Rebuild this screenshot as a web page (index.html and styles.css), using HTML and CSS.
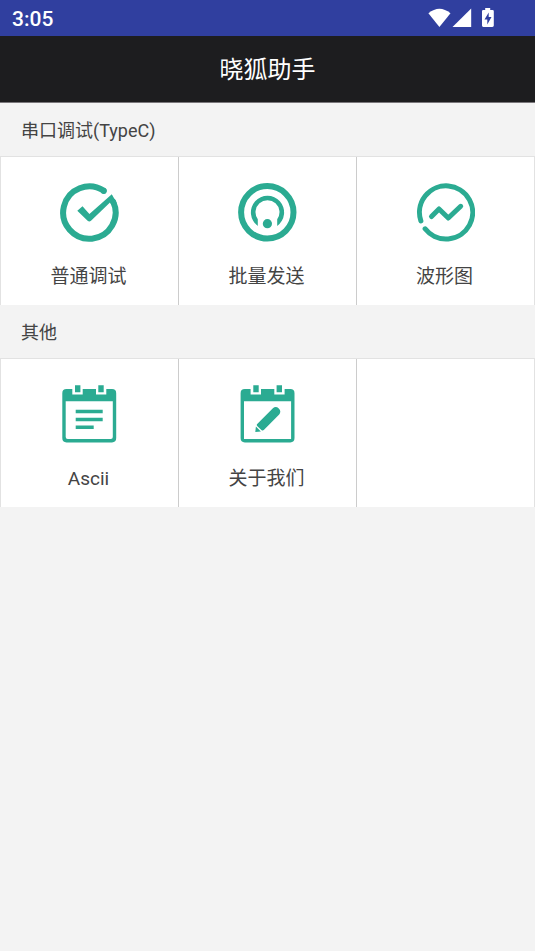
FILE: index.html
```html
<!DOCTYPE html>
<html lang="zh-CN">
<head>
<meta charset="utf-8">
<meta name="viewport" content="width=device-width, initial-scale=1">
<title>晓狐助手</title>
<link rel="stylesheet" href="styles.css">
</head>
<body>
<div class="status-bar">
  <time class="clock">3:05</time>
  <svg class="status-icons" viewBox="0 0 68 20" aria-hidden="true">
    <path d="M.4 5.3Q11.4-3.9 22.5 5.3L11.4 18.9Z"/>
    <path d="M24.5 18.9 43.2.4V18.9Z"/>
    <path fill-rule="evenodd" d="M57.2 0h5v2H64.5q1.3 0 1.3 1.3V17.5q0 1.4-1.5 1.4h-9q-1.3 0-1.3-1.4V3.3Q54 2 55.3 2h1.9ZM60.7 4.5 56.5 11.5h2.8v5l4.2-7.4h-2.8Z"/>
  </svg>
</div>
<header class="title-bar"><h1>晓狐助手</h1></header>
<main>
  <section>
    <h2>串口调试(TypeC)</h2>
    <nav class="tiles">
      <a class="tile" href="#debug">
        <svg class="icon" viewBox="0 0 60 60" aria-hidden="true">
          <path class="line ring" d="M44.6 8.6A26.2 26.2 0 1 0 54.1 19.5"/>
          <circle class="fill" cx="44.7" cy="9" r="3"/>
          <path class="fill" d="M18.3 28.7 23.5 24.3 30.4 32 52.8 12.3 58 21.5 52.2 22.5 51 20.5 32 38.7Q30.3 40.2 28.6 38.7Z"/>
        </svg>
        <span>普通调试</span>
      </a>
      <a class="tile" href="#batch">
        <svg class="icon" viewBox="0 0 60 60" aria-hidden="true">
          <circle class="line ring" cx="30.3" cy="30.3" r="26.2"/>
          <path class="fill" d="M20.8 43.9A16.6 16.6 0 1 1 40.2 43.9V37.3A12 12 0 1 0 20.8 37.3Z"/>
          <circle class="fill" cx="30.4" cy="41.7" r="4.6"/>
        </svg>
        <span>批量发送</span>
      </a>
      <a class="tile" href="#wave">
        <svg class="icon" viewBox="0 0 60 60" aria-hidden="true">
          <path class="line wave" d="M5.9 39A26.6 26.6 0 1 1 10.1 46.8"/>
          <path class="line wave" d="M16.5 34.5 24 27 33.3 36 45.7 24.3"/>
        </svg>
        <span>波形图</span>
      </a>
    </nav>
  </section>
  <section>
    <h2>其他</h2>
    <nav class="tiles">
      <a class="tile" href="#ascii">
        <svg class="icon" viewBox="0 0 60 60" aria-hidden="true">
          <path class="fill" fill-rule="evenodd" d="M7.5 5H13.3V10.5H23.7V5H37V10.5H47.3V5H53Q57.2 5 57.2 9.2V54Q57.2 58.4 53 58.4H7.5Q3.3 58.4 3.3 54V9.2Q3.3 5 7.5 5ZM6.7 17.3V53Q6.7 55 8.7 55H51.8Q53.8 55 53.8 53V17.3Z"/>
          <path class="fill" d="M16 1.3h5.4v7H16ZM39.3 1.3h5.4v7h-5.4ZM16.7 25.8h27v3.5h-27ZM16.7 33.7h27v3.6h-27ZM16.7 41.6h18v3.5h-18Z"/>
        </svg>
        <span>Ascii</span>
      </a>
      <a class="tile" href="#about">
        <svg class="icon" viewBox="0 0 60 60" aria-hidden="true">
          <path class="fill" fill-rule="evenodd" d="M7.8 5H13.6V10.5H24V5H37.3V10.5H47.6V5H53.3Q57.5 5 57.5 9.2V54Q57.5 58.4 53.3 58.4H7.8Q3.6 58.4 3.6 54V9.2Q3.6 5 7.8 5ZM7 17.3V55H54.1V17.3Z"/>
          <path class="fill" d="M16.3 1.3h5.4v7h-5.4ZM39.6 1.3H45v7h-5.4ZM20.2 40 35.9 24.2Q38.9 21.8 41.8 24.5 44.6 27.3 42.2 30.4L26.8 46Q25.6 47 24.4 45.9L20.4 42.2Q19.2 41 20.2 40ZM18.9 42.4 23.9 47.6 18.3 48.1Z"/>
        </svg>
        <span>关于我们</span>
      </a>
      <div class="tile"></div>
    </nav>
  </section>
</main>
</body>
</html>
```
FILE: styles.css
```css
* {
  box-sizing: border-box;
}

body {
  margin: 0;
  min-height: 100vh;
  background: #f3f3f3;
  color: #444;
  font-family: Roboto, "Noto Sans CJK SC", sans-serif;
}

.status-bar {
  display: flex;
  align-items: center;
  justify-content: space-between;
  height: 36px;
  padding: 0 39px 0 12px;
  background: #303f9f;
  color: #fff;
}

.clock {
  padding-top: 2px;
  font-size: 21px;
  font-weight: 500;
  line-height: 34px;
}

.status-icons {
  width: 68px;
  height: 20px;
  fill: #fff;
}

.title-bar {
  padding: 17px 16px 15px;
  border-bottom: 1px solid #7a777b;
  background: #1d1d1f;
  color: #fff;
  text-align: center;
}

h1 {
  margin: 0;
  font-size: 24px;
  font-weight: 400;
  line-height: 34px;
}

h2 {
  margin: 0;
  padding: 15px 21px 12px;
  font-size: 18px;
  font-weight: 400;
  line-height: 26px;
}

.tiles {
  display: grid;
  grid-template-columns: repeat(3, 1fr);
  border: 1px solid #e2e2e2;
  border-width: 1px 1px 0 0;
  background: #fff;
}

.tile {
  display: flex;
  flex-direction: column;
  align-items: center;
  gap: 21px;
  padding: 25px 2px 14px 0;
  border-left: 1px solid #ccc;
  color: inherit;
  font-size: 19px;
  line-height: 28px;
  text-decoration: none;
}

.tile:first-child {
  border-left-color: #e2e2e2;
}

.icon {
  width: 60px;
  height: 60px;
}

.fill {
  fill: #2bab92;
}

.line {
  fill: none;
  stroke: #2bab92;
  stroke-linecap: round;
  stroke-linejoin: round;
}

.ring {
  stroke-width: 6;
}

.wave {
  stroke-width: 5;
}
```
